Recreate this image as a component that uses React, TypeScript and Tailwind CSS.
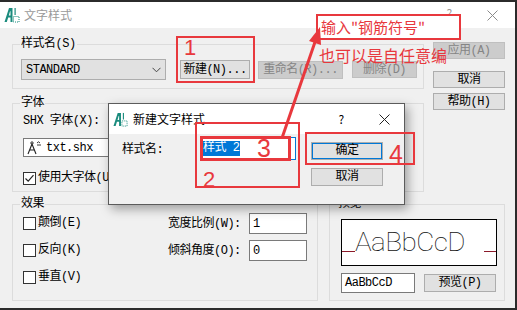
import React from "react";

type BtnProps = { children: React.ReactNode; className?: string; disabled?: boolean };

function Btn({ children, className = "", disabled = false }: BtnProps) {
  return (
    <div
      className={
        (disabled
          ? "border-[#bfbfbf] bg-[#cccccc] text-[#858585] "
          : "border-[#adadad] bg-[#e1e1e1] text-black ") +
        "flex shrink-0 items-center justify-center border leading-none " +
        className
      }
    >
      {children}
    </div>
  );
}

function Group({
  title,
  className = "",
  children,
}: {
  title: string;
  className?: string;
  children: React.ReactNode;
}) {
  return (
    <fieldset className={"shrink-0 border border-[#dcdcdc] " + className}>
      <legend className="ml-[7px] px-px leading-[12px]">{title}</legend>
      {children}
    </fieldset>
  );
}

function Check({ checked = false }: { checked?: boolean }) {
  return (
    <span className="flex h-[13px] w-[13px] shrink-0 items-center justify-center border border-[#333] bg-white">
      {checked && (
        <svg width="11" height="11" viewBox="0 0 11 11">
          <polyline points="1.5,5.5 4.2,8.2 9.5,2.2" fill="none" stroke="#222" strokeWidth="1.2" />
        </svg>
      )}
    </span>
  );
}

function CadIcon({ className = "" }: { className?: string }) {
  return (
    <svg viewBox="0 0 16 16" className={className}>
      <rect x="0" y="0" width="16" height="16" fill="#ffffff" />
      <path d="M0.5 15 L5 1 H8.5 V15 H6.5 V10.5 H4.2 L2.8 15 Z" fill="#1b8c7e" />
      <path d="M4.8 8.5 L6 4.2 H6.5 V8.5 Z" fill="#ffffff" />
      <rect x="9.5" y="9.5" width="5.5" height="5.5" fill="none" stroke="#1b8c7e" strokeWidth="1" strokeDasharray="1 1" />
      <rect x="10.5" y="1" width="1.2" height="7" fill="#1b8c7e" />
    </svg>
  );
}

function Chevron() {
  return (
    <svg width="9" height="6" viewBox="0 0 9 6">
      <polyline points="0.5,0.8 4.5,4.8 8.5,0.8" fill="none" stroke="#444" strokeWidth="1" />
    </svg>
  );
}

function FontGlyphIcon() {
  return (
    <svg width="15" height="14" viewBox="0 0 15 14">
      <path d="M1 13 L5 3 L9 13 M3 9 H7" fill="none" stroke="#222" strokeWidth="1.1" />
      <circle cx="5" cy="2" r="1.2" fill="none" stroke="#222" strokeWidth="0.9" />
      <path d="M10 2 L11.5 0.8 L13 2 M10 4 H14" fill="none" stroke="#222" strokeWidth="0.9" />
    </svg>
  );
}

function CloseX({ color }: { color: string }) {
  return (
    <svg width="11" height="11" viewBox="0 0 11 11">
      <path d="M0.5 0.5 L10.5 10.5 M10.5 0.5 L0.5 10.5" stroke={color} strokeWidth="1" fill="none" />
    </svg>
  );
}

export default function App() {
  return (
    <div className="relative h-[310px] w-[517px] overflow-hidden border-t-2 border-r-2 border-b-2 border-[#2b2b2b] bg-[#f0f0f0] font-['Liberation_Mono','Noto_Sans_CJK_SC',monospace] text-[12px] tracking-[-0.5px] text-black">
      {/* title bar */}
      <div className="flex h-[26px] items-center bg-white">
        <CadIcon className="ml-[4px] h-[16px] w-[16px]" />
        <span className="ml-[4px] font-['Noto_Sans_CJK_SC',sans-serif] text-[12px] tracking-normal text-[#9a9a9a]">
          文字样式
        </span>
        <span className="ml-auto mb-[4px] w-[10px] text-center font-['Noto_Sans_CJK_SC',sans-serif] text-[12px] leading-[14px] text-[#9a9a9a]">
          ?
        </span>
        <span className="ml-[33px] mr-[17px] flex">
          <CloseX color="#8a8a8a" />
        </span>
      </div>

      {/* upper body */}
      <div className="flex pl-[12px] pt-[10px]">
        <div className="flex w-[412px] flex-col">
          <Group title="样式名(S)" className="h-[51px] w-[412px]">
            <div className="mt-[9px] flex items-center pl-[8px]">
              <div className="flex h-[21px] w-[145px] items-center justify-between border border-[#adadad] bg-[#e1e1e1] pl-[4px] pr-[4px]">
                <span>STANDARD</span>
                <Chevron />
              </div>
              <Btn className="ml-[14px] h-[19px] w-[70px]">新建(N)...</Btn>
              <Btn disabled className="ml-[8px] h-[18px] w-[85px]">重命名(R)...</Btn>
              <Btn disabled className="ml-[9px] h-[17px] w-[65px]">删除(D)</Btn>
            </div>
          </Group>
          <Group title="字体" className="mt-[8px] h-[95px] w-[412px]">
            <div className="flex flex-col pl-[10px]">
              <span className="mt-[6px] leading-[12px]">SHX 字体(X):</span>
              <div className="mt-[11px] flex h-[19px] w-[160px] items-center border border-[#7a7a7a] bg-white pl-[3px]">
                <FontGlyphIcon />
                <span className="ml-[4px]">txt.shx</span>
              </div>
              <div className="mt-[15px] flex items-center">
                <Check checked />
                <span className="ml-[2px] leading-[13px]">使用大字体(U)</span>
              </div>
            </div>
          </Group>
        </div>
        <div className="ml-[9px] flex w-[72px] flex-col pt-[4px]">
          <Btn disabled className="h-[17px] w-[72px]">应用(A)</Btn>
          <Btn className="mt-[12px] h-[17px] w-[72px]">取消</Btn>
          <Btn className="mt-[5px] h-[17px] w-[72px]">帮助(H)</Btn>
        </div>
      </div>

      {/* lower body */}
      <div className="mt-[6px] flex pl-[12px]">
        <Group title="效果" className="h-[103px] w-[306px]">
          <div className="flex pl-[10px]">
            <div className="flex w-[145px] flex-col gap-[14px] pt-[7px]">
              <div className="flex items-center">
                <Check />
                <span className="ml-[2px] leading-[13px]">颠倒(E)</span>
              </div>
              <div className="flex items-center">
                <Check />
                <span className="ml-[2px] leading-[13px]">反向(K)</span>
              </div>
              <div className="flex items-center">
                <Check />
                <span className="ml-[2px] leading-[13px]">垂直(V)</span>
              </div>
            </div>
            <div className="flex flex-col gap-[6px] pt-[3px]">
              <div className="flex items-center">
                <span className="w-[81px]">宽度比例(W):</span>
                <div className="flex h-[21px] w-[58px] items-center border border-[#7a7a7a] bg-white pl-[3px]">1</div>
              </div>
              <div className="flex items-center">
                <span className="w-[81px]">倾斜角度(O):</span>
                <div className="flex h-[21px] w-[58px] items-center border border-[#7a7a7a] bg-white pl-[3px]">0</div>
              </div>
            </div>
          </div>
        </Group>
        <Group title="预览" className="ml-[11px] h-[103px] w-[176px]">
          <div className="flex flex-col pl-[11px] pt-[9px]">
            <div className="h-[47px] w-[156px] border border-black bg-white">
              <svg width="154" height="45" viewBox="0 0 154 45">
                <line x1="0" y1="31.5" x2="13" y2="31.5" stroke="#8b1a2a" strokeWidth="1" />
                <line x1="142" y1="31.5" x2="154" y2="31.5" stroke="#8b1a2a" strokeWidth="1" />
                <text
                  x="13"
                  y="31"
                  fontFamily="Roboto,'DejaVu Sans',sans-serif"
                  fontWeight="100"
                  fontSize="26"
                  fill="#111"
                  textLength="110"
                  lengthAdjust="spacingAndGlyphs"
                >
                  AaBbCcD
                </text>
              </svg>
            </div>
            <div className="mt-[7px] flex items-center">
              <div className="flex h-[20px] w-[74px] items-center border border-[#7a7a7a] bg-white pl-[3px]">AaBbCcD</div>
              <Btn className="ml-[9px] h-[18px] w-[72px]">预览(P)</Btn>
            </div>
          </div>
        </Group>
      </div>

      {/* dialog 新建文字样式 */}
      <div className="absolute left-[108px] top-[101px] flex h-[102px] w-[297px] flex-col border border-[#5b5b5b] bg-[#f0f0f0] shadow-[3px_4px_10px_rgba(0,0,0,0.35)]">
        <div className="flex h-[30px] shrink-0 items-center bg-white">
          <CadIcon className="ml-[4px] h-[15px] w-[15px]" />
          <span className="ml-[5px] font-['Noto_Sans_CJK_SC',sans-serif] text-[12px] tracking-normal">新建文字样式</span>
          <span className="ml-auto w-[10px] text-center font-['Noto_Sans_CJK_SC',sans-serif] text-[12px]">?</span>
          <span className="ml-[33px] mr-[14px] flex">
            <CloseX color="#222" />
          </span>
        </div>
        <div className="flex">
          <span className="ml-[13px] mt-[10px] w-[78px] leading-[12px]">样式名:</span>
          <div className="mt-[3px] flex h-[23px] w-[96px] items-center border border-[#0078d7] bg-white pl-[1px]">
            <span className="bg-[#0078d7] px-px leading-[15px] text-white">样式 2</span>
          </div>
          <div className="ml-[15px] mt-[8px] flex flex-col gap-[8px]">
            <Btn className="h-[18px] w-[72px] border-[#0078d7] shadow-[inset_0_0_0_1px_#0078d7]">确定</Btn>
            <Btn className="h-[18px] w-[72px]">取消</Btn>
          </div>
        </div>
      </div>

      {/* annotations */}
      <div className="absolute left-[176px] top-[34px] h-[47px] w-[79px] border-2 border-[#e8383d]" />
      <span className="absolute left-[184px] top-[34px] font-['Liberation_Sans',sans-serif] text-[22px] leading-[24px] tracking-normal text-[#e8383d]">
        1
      </span>

      <div className="absolute left-[316px] top-[12px] flex h-[26px] w-[145px] items-center border-2 border-[#e8383d] bg-white pl-[3px]">
        <span className="font-['Noto_Sans_CJK_SC',sans-serif] text-[15px] leading-[18px] tracking-normal text-[#e8383d]">
          输入"钢筋符号"
        </span>
      </div>
      <span className="absolute left-[319px] top-[43px] font-['Noto_Sans_CJK_SC',sans-serif] text-[16px] leading-[20px] tracking-normal text-[#e8383d]">
        也可以是自任意编
      </span>

      <svg className="absolute left-0 top-0" width="517" height="308" viewBox="0 2 517 308">
        <line x1="282" y1="138" x2="315" y2="42" stroke="#e8383d" strokeWidth="3" />
        <polygon points="320,27 321,45 309,41" fill="#e8383d" />
      </svg>

      <div className="absolute left-[195px] top-[120px] h-[66px] w-[105px] border-2 border-[#e8383d]" />
      <span className="absolute left-[203px] top-[166px] font-['Liberation_Sans',sans-serif] text-[22px] leading-[24px] tracking-normal text-[#e8383d]">
        2
      </span>
      <div className="absolute left-[200px] top-[134px] h-[25px] w-[91px] border-[3px] border-[#e8383d]" />
      <span className="absolute left-[257px] top-[132px] font-['Liberation_Sans',sans-serif] text-[25px] leading-[28px] tracking-normal text-[#e8383d]">
        3
      </span>
      <div className="absolute left-[305px] top-[130px] h-[33px] w-[110px] border-2 border-[#e8383d]" />
      <span className="absolute left-[389px] top-[138px] font-['Liberation_Sans',sans-serif] text-[25px] leading-[28px] tracking-normal text-[#e8383d]">
        4
      </span>
    </div>
  );
}
